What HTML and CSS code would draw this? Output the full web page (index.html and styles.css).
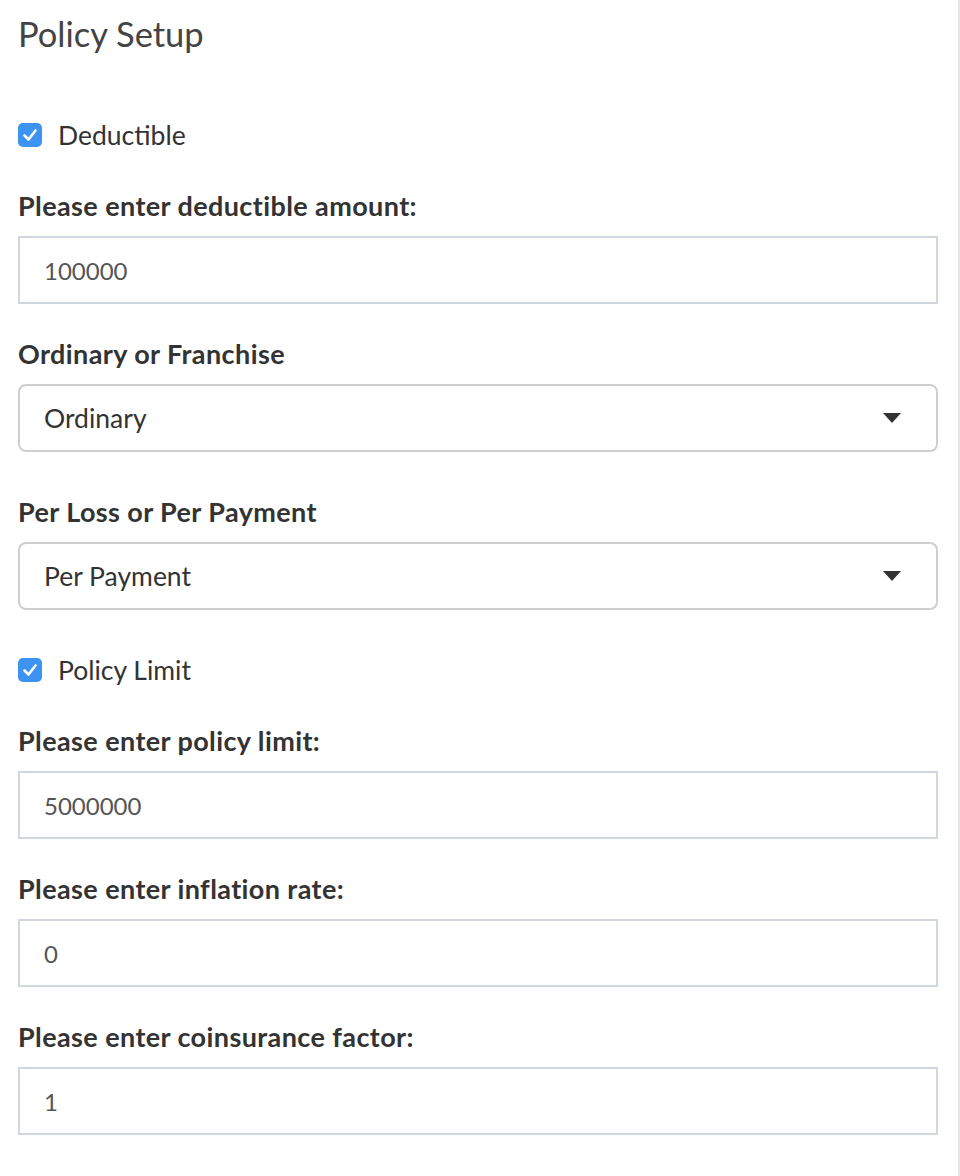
FILE: index.html
```html
<!DOCTYPE html>
<html lang="en">
<head>
<meta charset="utf-8">
<title>Policy Setup</title>
<link rel="stylesheet" href="styles.css">
</head>
<body>
<div class="sidebar">
  <h3 class="title">Policy Setup</h3>

  <div class="check check-first">
    <span class="box"><svg viewBox="0 0 24 24" width="24" height="24"><path d="M6.5 12.5 L10.5 16.5 L17.5 7.5" fill="none" stroke="#fff" stroke-width="2.6" stroke-linecap="round" stroke-linejoin="round"/></svg></span>
    <span class="check-label">Deductible</span>
  </div>

  <div class="field">
    <label class="field-label">Please enter deductible amount:</label>
    <input class="text-input" type="text" value="100000">
  </div>

  <div class="field field-select">
    <label class="field-label">Ordinary or Franchise</label>
    <div class="select"><span class="select-value">Ordinary</span><span class="caret"></span></div>
  </div>

  <div class="field field-select">
    <label class="field-label">Per Loss or Per Payment</label>
    <div class="select"><span class="select-value">Per Payment</span><span class="caret"></span></div>
  </div>

  <div class="check">
    <span class="box"><svg viewBox="0 0 24 24" width="24" height="24"><path d="M6.5 12.5 L10.5 16.5 L17.5 7.5" fill="none" stroke="#fff" stroke-width="2.6" stroke-linecap="round" stroke-linejoin="round"/></svg></span>
    <span class="check-label">Policy Limit</span>
  </div>

  <div class="field">
    <label class="field-label">Please enter policy limit:</label>
    <input class="text-input" type="text" value="5000000">
  </div>

  <div class="field">
    <label class="field-label">Please enter inflation rate:</label>
    <input class="text-input" type="text" value="0">
  </div>

  <div class="field">
    <label class="field-label">Please enter coinsurance factor:</label>
    <input class="text-input" type="text" value="1">
  </div>
</div>
</body>
</html>
```

FILE: styles.css
```css
html, body {
  margin: 0;
  padding: 0;
  background: #fff;
}

.sidebar {
  box-sizing: border-box;
  width: 960px;
  min-height: 1176px;
  padding: 0 20px 0 18px;
  border-right: 2px solid #e3e6ea;
  font-family: "Lato", "Open Sans", sans-serif;
  color: #333;
  display: flex;
  flex-direction: column;
}

.title {
  margin: 14px 0 0 0;
  height: 40px;
  line-height: 40px;
  font-size: 34.5px;
  font-weight: 400;
  color: #444;
}

.check {
  display: flex;
  align-items: center;
  height: 40px;
  margin-top: 39px;
}

.check-first {
  margin-top: 61px;
}

.box {
  width: 24px;
  height: 24px;
  border-radius: 5px;
  background: #3d93f2;
  display: flex;
}

.check-label {
  margin-left: 16px;
  font-size: 26.5px;
  color: #333;
}

.field {
  display: flex;
  flex-direction: column;
  margin-top: 30px;
}

.check + .field {
  margin-top: 31px;
}

.field-select + .field-select,
.field-select + .check {
  margin-top: 40px;
}

.field-label {
  height: 40px;
  line-height: 40px;
  margin: 0 0 10px 0;
  font-size: 27px;
  font-weight: 700;
  letter-spacing: 0.4px;
  color: #333;
}

.text-input {
  box-sizing: border-box;
  width: 920px;
  height: 68px;
  margin: 0;
  padding: 0 24px 0 24px;
  border: 2px solid #d2d6de;
  border-radius: 0;
  background: #fff;
  font-family: "Lato", "Open Sans", sans-serif;
  font-size: 24px;
  color: #555;
  outline: none;
}

.select {
  box-sizing: border-box;
  width: 920px;
  height: 68px;
  border: 2px solid #cfcfcf;
  border-radius: 8px;
  background: #fff;
  display: flex;
  align-items: center;
  justify-content: space-between;
  padding: 0 35px 0 24px;
}

.select-value {
  font-size: 26.5px;
  color: #333;
}

.caret {
  width: 0;
  height: 0;
  border-left: 9.5px solid transparent;
  border-right: 9.5px solid transparent;
  border-top: 10px solid #333;
}
```
